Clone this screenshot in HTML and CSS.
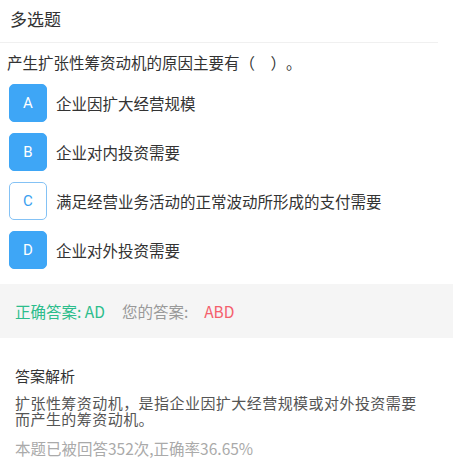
FILE: index.html
```html
<!doctype html>
<html lang="zh-CN">
<head>
    <meta charset="UTF-8">
    <meta name="viewport" content="width=device-width, initial-scale=1.0">
    <title>多选题</title>
    <link rel="stylesheet" href="styles.css">
</head>
<body>
    <!-- Header -->
    <div class="header">多选题</div>

    <!-- Question -->
    <div class="question">产生扩张性筹资动机的原因主要有（&ensp;&ensp;）。</div>

    <ul class="options">
        <li class="option"><span class="letter filled">A</span><span class="text">企业因扩大经营规模</span></li>
        <li class="option"><span class="letter filled">B</span><span class="text">企业对内投资需要</span></li>
        <li class="option"><span class="letter">C</span><span class="text">满足经营业务活动的正常波动所形成的支付需要</span></li>
        <li class="option"><span class="letter filled">D</span><span class="text">企业对外投资需要</span></li>
    </ul>

    <!-- Answer bar -->
    <div class="answer-bar">
        <span class="right">正确答案: AD</span>
        <span class="yours">您的答案:</span>
        <span class="wrong">ABD</span>
    </div>

    <!-- Analysis -->
    <div class="analysis">
        <h2>答案解析</h2>
        <p class="desc">扩张性筹资动机，是指企业因扩大经营规模或对外投资需要<br>而产生的筹资动机。</p>
        <p class="stats">本题已被回答352次,正确率36.65%</p>
    </div>
</body>
</html>
```

FILE: styles.css
```css
/* General Styles */
body {
    margin: 0;
    font-family: "Noto Sans CJK SC", "Noto Sans", sans-serif;
    background-color: #fff;
    color: #333;
    text-spacing-trim: space-all;
}

/* Header */
.header {
    height: 42px;
    line-height: 38px;
    padding-left: 10px;
    margin-right: 15px;
    font-size: 17px;
    border-bottom: 1px solid #f0f0f0;
}

/* Question */
.question {
    padding: 0 7px;
    margin-top: 8px;
    font-size: 15.5px;
    line-height: 22px;
}

/* Options */
.options {
    list-style: none;
    margin: 11px 0 0;
    padding: 0 0 0 9px;
    display: flex;
    flex-direction: column;
    gap: 11px;
}

.option {
    display: flex;
    align-items: center;
    gap: 9px;
    font-size: 15.5px;
}

.letter {
    width: 38px;
    height: 38px;
    box-sizing: border-box;
    border-radius: 5px;
    border: 1px solid #84c2f5;
    color: #3a9ff0;
    display: flex;
    align-items: center;
    justify-content: center;
    font-family: "Roboto", "Noto Sans", sans-serif;
    font-size: 15px;
}

.letter.filled {
    background-color: #3ea6f6;
    border-color: #3ea6f6;
    color: #fff;
}

/* Answer bar */
.answer-bar {
    margin-top: 15px;
    height: 54px;
    background-color: #f5f5f5;
    display: flex;
    align-items: center;
    padding-left: 15px;
    font-size: 15.5px;
}

.answer-bar .right {
    color: #2cbd8c;
}

.answer-bar .yours {
    color: #999;
    margin-left: 17px;
}

.answer-bar .wrong {
    color: #f4606c;
    margin-left: 16px;
}

/* Analysis */
.analysis {
    padding: 0 15px;
    margin-top: 27px;
}

.analysis h2 {
    margin: 0;
    font-size: 15px;
    font-weight: normal;
    line-height: 22px;
    color: #333;
}

.analysis .desc {
    margin: 8px 0 0;
    font-size: 15px;
    line-height: 16px;
    letter-spacing: 0.45px;
    color: #555;
}

.analysis .stats {
    margin: 10px 0 0;
    font-size: 15.5px;
    line-height: 22px;
    color: #aaa;
}
```
